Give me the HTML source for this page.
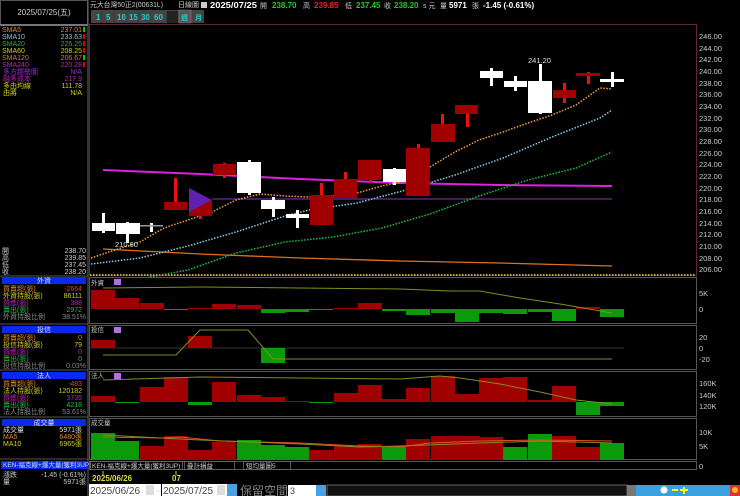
<!DOCTYPE html>
<html><head><meta charset="utf-8"><style>
body{margin:0;background:#000;width:740px;height:496px;overflow:hidden;font-family:"Liberation Sans","Noto Sans CJK TC",sans-serif}
svg{display:block}
text{font-family:"Liberation Sans","Noto Sans CJK TC",sans-serif}
</style></head><body>
<svg width="740" height="496" viewBox="0 0 740 496" xmlns="http://www.w3.org/2000/svg">
<rect width="740" height="496" fill="#000"/>
<!-- left panel -->
<rect x="0.5" y="0.5" width="87" height="24" fill="none" stroke="#555"/>
<text x="44" y="15" fill="#ccc" font-size="8" text-anchor="middle">2025/07/25(五)</text>
<line x1="0" y1="25" x2="88" y2="25" stroke="#777" stroke-width="2"/>
<line x1="88" y1="0" x2="88" y2="496" stroke="#666"/>
<g font-size="7">
<text x="2" y="32" fill="#e08a30">SMA5</text><text x="82" y="32" fill="#e08a30" text-anchor="end">237.01</text>
<text x="2" y="39" fill="#7fc8e0">SMA10</text><text x="82" y="39" fill="#7fc8e0" text-anchor="end">233.63</text>
<text x="2" y="46" fill="#20b040">SMA20</text><text x="82" y="46" fill="#20b040" text-anchor="end">226.25</text>
<text x="2" y="53" fill="#d0d020">SMA60</text><text x="82" y="53" fill="#d0d020" text-anchor="end">208.25</text>
<text x="2" y="60" fill="#d08030">SMA120</text><text x="82" y="60" fill="#d08030" text-anchor="end">206.67</text>
<text x="2" y="67" fill="#c020c0">SMA240</text><text x="82" y="67" fill="#c020c0" text-anchor="end">220.28</text>
<text x="3" y="74" fill="#9030d0">多方趨勢圖</text><text x="82" y="74" fill="#9030d0" text-anchor="end">N/A</text>
<text x="3" y="81" fill="#c020c0">融多成本</text><text x="82" y="81" fill="#c020c0" text-anchor="end">217.9</text>
<text x="3" y="88" fill="#d0d020">多由均線</text><text x="82" y="88" fill="#d0d020" text-anchor="end">111.78</text>
<text x="3" y="95" fill="#d0d020">由將</text><text x="82" y="95" fill="#d0d020" text-anchor="end">N/A</text>
</g>
<g fill="#0c0"><rect x="83" y="27" width="2" height="5"/><rect x="83" y="55" width="2" height="5"/></g>
<g fill="#d00"><rect x="83" y="34" width="2" height="5"/><rect x="83" y="41" width="2" height="5"/><rect x="83" y="48" width="2" height="5"/><rect x="83" y="62" width="2" height="5"/></g>
<g font-size="7" fill="#ccc">
<text x="2" y="253">開</text><text x="86" y="253" text-anchor="end">238.70</text>
<text x="2" y="260">高</text><text x="86" y="260" text-anchor="end">239.85</text>
<text x="2" y="267">低</text><text x="86" y="267" text-anchor="end">237.45</text>
<text x="2" y="274">收</text><text x="86" y="274" text-anchor="end">238.20</text>
</g>
<g font-size="7">
<rect x="2" y="277" width="84" height="7" fill="#0a28f0"/><text x="44" y="283" fill="#ddd" text-anchor="middle">外資</text>
<text x="3" y="291" fill="#e08a30">買賣超(張)</text><text x="82" y="291" fill="#e04040" text-anchor="end">-2664</text>
<text x="3" y="298" fill="#d0d020">外資持股(張)</text><text x="82" y="298" fill="#d0d020" text-anchor="end">86111</text>
<text x="3" y="305" fill="#c020c0">買進(張)</text><text x="82" y="305" fill="#c020c0" text-anchor="end">388</text>
<text x="3" y="312" fill="#20c040">賣出(張)</text><text x="82" y="312" fill="#20c040" text-anchor="end">2972</text>
<text x="3" y="319" fill="#888">外資持股比例</text><text x="86" y="319" fill="#888" text-anchor="end">38.51%</text>
<rect x="2" y="326" width="84" height="7" fill="#0a28f0"/><text x="44" y="332" fill="#ddd" text-anchor="middle">投信</text>
<text x="3" y="340" fill="#e08a30">買賣超(張)</text><text x="82" y="340" fill="#e08a30" text-anchor="end">0</text>
<text x="3" y="347" fill="#d0d020">投信持股(張)</text><text x="82" y="347" fill="#d0d020" text-anchor="end">79</text>
<text x="3" y="354" fill="#c020c0">買進(張)</text><text x="82" y="354" fill="#c020c0" text-anchor="end">0</text>
<text x="3" y="361" fill="#20c040">賣出(張)</text><text x="82" y="361" fill="#20c040" text-anchor="end">0</text>
<text x="3" y="368" fill="#888">投信持股比例</text><text x="86" y="368" fill="#888" text-anchor="end">0.03%</text>
<rect x="2" y="372" width="84" height="7" fill="#0a28f0"/><text x="44" y="378" fill="#ddd" text-anchor="middle">法人</text>
<text x="3" y="386" fill="#e08a30">買賣超(張)</text><text x="82" y="386" fill="#e04040" text-anchor="end">-483</text>
<text x="3" y="393" fill="#d0d020">法人持股(張)</text><text x="82" y="393" fill="#d0d020" text-anchor="end">120182</text>
<text x="3" y="400" fill="#c020c0">買進(張)</text><text x="82" y="400" fill="#c020c0" text-anchor="end">3735</text>
<text x="3" y="407" fill="#20c040">賣出(張)</text><text x="82" y="407" fill="#20c040" text-anchor="end">4218</text>
<text x="3" y="414" fill="#888">法人持股比例</text><text x="86" y="414" fill="#888" text-anchor="end">53.61%</text>
<rect x="2" y="419" width="84" height="7" fill="#0a28f0"/><text x="44" y="425" fill="#ddd" text-anchor="middle">成交量</text>
<text x="3" y="432" fill="#ddd">成交量</text><text x="82" y="432" fill="#ddd" text-anchor="end">5971張</text>
<text x="3" y="439" fill="#e08a30">MA5</text><text x="82" y="439" fill="#e08a30" text-anchor="end">6480張</text>
<text x="3" y="446" fill="#d0d020">MA10</text><text x="82" y="446" fill="#d0d020" text-anchor="end">6965張</text>
<rect x="1" y="461" width="86" height="8" fill="#0a28f0"/><text x="3" y="467" fill="#ddd" font-size="6.5">KEN-福克線+爆大量(獲利3UP)</text>
<text x="3" y="477" fill="#ccc">漲跌</text><text x="86" y="477" fill="#ccc" text-anchor="end">-1.45 (-0.61%)</text>
<text x="3" y="484" fill="#ccc">量</text><text x="86" y="484" fill="#ccc" text-anchor="end">5971張</text>
</g>
<g stroke="#555"><line x1="0" y1="276" x2="88" y2="276"/><line x1="0" y1="324" x2="88" y2="324"/><line x1="0" y1="370" x2="88" y2="370"/><line x1="0" y1="417" x2="88" y2="417"/><line x1="0" y1="459" x2="88" y2="459"/></g>

<!-- top header -->
<g font-size="8">
<text x="90" y="7" fill="#ccc" font-size="7" textLength="73" lengthAdjust="spacingAndGlyphs">元大台灣50正2(00631L)</text>
<text x="178" y="7" fill="#ccc" font-size="7">日線圖</text>
<rect x="201" y="2" width="6" height="6" fill="#ccc"/>
<text x="210" y="8" fill="#fff" font-weight="bold" textLength="47" lengthAdjust="spacingAndGlyphs">2025/07/25</text>
<text x="260" y="8" fill="#ccc" font-size="7">開</text><text x="272" y="8" fill="#2c2" font-weight="bold">238.70</text>
<text x="303" y="8" fill="#ccc" font-size="7">高</text><text x="314" y="8" fill="#e22" font-weight="bold">239.85</text>
<text x="345" y="8" fill="#ccc" font-size="7">低</text><text x="356" y="8" fill="#2c2" font-weight="bold">237.45</text>
<text x="384" y="8" fill="#ccc" font-size="7">收</text><text x="394" y="8" fill="#2c2" font-weight="bold">238.20</text>
<text x="423" y="8" fill="#ccc" font-size="7">s 元</text><text x="440" y="8" fill="#ccc" font-size="7">量</text>
<text x="449" y="8" fill="#fff" font-weight="bold">5971</text><text x="472" y="8" fill="#ccc" font-size="7">張</text>
<text x="483" y="8" fill="#fff" font-weight="bold">-1.45 (-0.61%)</text>
</g>
<g font-size="8" fill="#2cc" font-weight="bold">
<rect x="91" y="10" width="113" height="13" fill="#444"/>
<text x="96" y="20">1</text><text x="106" y="20">5</text><text x="117" y="20">10</text><text x="129" y="20">15</text><text x="141" y="20">30</text><text x="154" y="20">60</text>
<rect x="167" y="11" width="11" height="12" fill="#222"/>
<rect x="179" y="10" width="12" height="13" fill="#555" stroke="#888" stroke-width="0.5"/>
<text x="181" y="20" font-size="7">週</text><text x="195" y="20" font-size="7">月</text>
</g>
<g stroke="#333" stroke-width="0.6"><line x1="102" y1="11" x2="102" y2="23"/><line x1="114" y1="11" x2="114" y2="23"/><line x1="126" y1="11" x2="126" y2="23"/><line x1="138" y1="11" x2="138" y2="23"/><line x1="150" y1="11" x2="150" y2="23"/><line x1="166" y1="11" x2="166" y2="23"/></g>

<!-- chart frames -->
<rect x="89.5" y="24.5" width="607" height="251" fill="none" stroke="#5a2a38"/>
<g fill="none" stroke="#555">
<rect x="89.5" y="277.5" width="607" height="46"/>
<rect x="89.5" y="325.5" width="607" height="44"/>
<rect x="89.5" y="371.5" width="607" height="45"/>
<rect x="89.5" y="418.5" width="607" height="41"/>
<rect x="89.5" y="461.5" width="607" height="8"/>
</g>
<!-- y axis -->
<g font-size="7.5" fill="#ccc">
<text x="699" y="39">246.00</text><text x="699" y="51">244.00</text><text x="699" y="62">242.00</text><text x="699" y="74">240.00</text><text x="699" y="86">238.00</text><text x="699" y="97">236.00</text><text x="699" y="109">234.00</text><text x="699" y="121">232.00</text><text x="699" y="132">230.00</text><text x="699" y="144">228.00</text><text x="699" y="156">226.00</text><text x="699" y="167">224.00</text><text x="699" y="179">222.00</text><text x="699" y="191">220.00</text><text x="699" y="202">218.00</text><text x="699" y="214">216.00</text><text x="699" y="226">214.00</text><text x="699" y="237">212.00</text><text x="699" y="249">210.00</text><text x="699" y="261">208.00</text><text x="699" y="272">206.00</text>
<text x="699" y="296">5K</text><text x="699" y="312">0</text>
<text x="699" y="340">20</text><text x="699" y="351">0</text><text x="699" y="362">-20</text>
<text x="699" y="386">160K</text><text x="699" y="398">140K</text><text x="699" y="409">120K</text>
<text x="699" y="435">10K</text><text x="699" y="449">5K</text><text x="699" y="469">0</text>
</g>

<!-- MA lines -->
<polyline fill="none" stroke="#e07020" stroke-width="1.3" points="103,249 200,254 300,258 400,261 500,263 612,266"/>
<polyline fill="none" stroke="#e020e0" stroke-width="2" points="103,170 200,174 300,179 400,183 500,185 612,186"/>
<line x1="212" y1="199" x2="612" y2="199" stroke="#602080" stroke-width="1.5"/>
<polyline fill="none" stroke="#f0a040" stroke-width="1.5" stroke-dasharray="1.5 1.5" points="91,258 115,250 140,242 164,228 188,220 212,212 236,200 260,194 285,196 309,197 333,196 357,193 382,186 406,181 430,167 455,152 479,140 503,132 528,123 552,115 576,105 600,88 612,89"/>
<polyline fill="none" stroke="#80d0f0" stroke-width="1.5" stroke-dasharray="1.5 1.5" points="91,264 140,258 188,246 236,232 285,216 309,210 357,203 406,190 455,175 503,158 552,137 600,118 612,110"/>
<polyline fill="none" stroke="#20c040" stroke-width="1.5" stroke-dasharray="1.5 1.5" points="150,277 188,270 236,253 285,242 333,237 382,228 430,214 479,196 528,180 576,168 612,152"/>
<line x1="90" y1="275" x2="696" y2="275" stroke="#c0a040" stroke-width="2" stroke-dasharray="1.5 1.5"/>

<!-- candles -->
<g fill="#fff">
<rect x="102" y="213" width="3" height="20"/><rect x="92" y="223" width="23" height="8"/>
<rect x="126" y="222" width="3" height="21"/><rect x="116" y="223" width="24" height="11"/>
<rect x="150" y="223" width="3" height="9"/><rect x="140" y="225" width="23" height="1.5" fill="#999"/>
<rect x="248" y="160" width="3" height="35"/><rect x="237" y="162" width="24" height="31"/>
<rect x="272" y="197" width="3" height="20"/><rect x="261" y="200" width="24" height="9"/>
<rect x="296" y="210" width="3" height="18"/><rect x="286" y="214" width="23" height="4"/>
<rect x="393" y="168" width="3" height="17"/><rect x="383" y="169" width="23" height="13"/>
<rect x="490" y="68" width="3" height="18"/><rect x="480" y="71" width="23" height="7"/>
<rect x="514" y="76" width="3" height="15"/><rect x="504" y="81" width="23" height="6"/>
<rect x="539" y="64" width="3" height="50"/><rect x="528" y="81" width="24" height="32"/>
<rect x="611" y="72" width="3" height="15"/><rect x="600" y="79" width="24" height="3"/>
</g>
<g fill="#ee1010">
<rect x="174" y="178" width="3" height="32"/><rect x="199" y="200" width="3" height="19"/>
<rect x="223" y="163" width="3" height="15"/><rect x="320" y="183" width="3" height="42"/>
<rect x="344" y="172" width="3" height="26"/><rect x="369" y="160" width="3" height="23"/>
<rect x="417" y="144" width="3" height="52"/><rect x="441" y="114" width="3" height="28"/>
<rect x="466" y="105" width="3" height="22"/><rect x="563" y="83" width="3" height="20"/>
<rect x="587" y="72" width="3" height="12"/>
</g>
<g fill="#a00000">
<rect x="164" y="202" width="23" height="8"/><rect x="189" y="200" width="23" height="16"/>
<rect x="213" y="164" width="23" height="11"/><rect x="310" y="195" width="23" height="30"/>
<rect x="334" y="179" width="23" height="19"/><rect x="358" y="160" width="23" height="20"/>
<rect x="406" y="148" width="24" height="48"/><rect x="431" y="124" width="24" height="18"/>
<rect x="455" y="105" width="23" height="9"/><rect x="553" y="90" width="23" height="8"/>
<rect x="576" y="73" width="24" height="3"/>
</g>
<polygon points="189,188 212,200 189,212" fill="#6020b0"/>
<text x="115" y="247" fill="#ddd" font-size="7.5">210.60</text>
<text x="528" y="63" fill="#ddd" font-size="7.5">241.20</text>

<!-- sub panel labels -->
<g font-size="6.5" fill="#ccc">
<text x="91" y="285">外資</text><text x="91" y="332">投信</text><text x="91" y="378">法人</text><text x="91" y="425">成交量</text>
</g>
<g fill="#b070e0"><rect x="114" y="279" width="7" height="6"/><rect x="114" y="327" width="7" height="6"/><rect x="114" y="373" width="7" height="6"/></g>

<!-- 外資 bars -->
<g fill="#a00000">
<rect x="91" y="290" width="24" height="19"/><rect x="115" y="298" width="24" height="11"/><rect x="140" y="303" width="24" height="6"/>
<rect x="188" y="308" width="24" height="1"/><rect x="212" y="304" width="24" height="5"/><rect x="237" y="305" width="24" height="4"/>
<rect x="334" y="308" width="24" height="1"/><rect x="358" y="303" width="24" height="6"/><rect x="576" y="307" width="24" height="2"/>
</g>
<g fill="#0a9a0a">
<rect x="164" y="309" width="24" height="1"/><rect x="261" y="309" width="24" height="4"/><rect x="285" y="309" width="24" height="3"/>
<rect x="309" y="309" width="24" height="1"/><rect x="382" y="309" width="24" height="2"/><rect x="406" y="309" width="24" height="6"/>
<rect x="431" y="309" width="24" height="4"/><rect x="455" y="309" width="24" height="13"/><rect x="479" y="309" width="24" height="4"/>
<rect x="503" y="309" width="24" height="5"/><rect x="528" y="309" width="24" height="3"/>
<rect x="552" y="309" width="24" height="12"/>
<rect x="600" y="309" width="24" height="8"/>
</g>
<polyline fill="none" stroke="#8a8a20" points="103,288 200,287 300,288 400,289 450,291 480,291 520,298 560,304 612,313"/>
<!-- 投信 -->
<line x1="90" y1="348" x2="624" y2="348" stroke="#333"/>
<rect x="91" y="340" width="24" height="8" fill="#a00000"/>
<rect x="188" y="336" width="24" height="12" fill="#a00000"/>
<rect x="261" y="348" width="24" height="15" fill="#0a9a0a"/>
<polyline fill="none" stroke="#8a8a20" points="103,355 176,355 200,330 248,330 273,359 612,359"/>
<!-- 法人 -->
<g fill="#a00000">
<rect x="91" y="396" width="24" height="6"/><rect x="140" y="387" width="24" height="15"/><rect x="164" y="377" width="24" height="25"/>
<rect x="212" y="382" width="24" height="20"/><rect x="237" y="395" width="24" height="7"/><rect x="261" y="397" width="24" height="5"/>
<rect x="285" y="401" width="24" height="1"/><rect x="334" y="393" width="24" height="9"/><rect x="358" y="385" width="24" height="17"/>
<rect x="382" y="399" width="24" height="3"/><rect x="406" y="388" width="24" height="14"/><rect x="431" y="376" width="24" height="26"/>
<rect x="455" y="394" width="24" height="8"/><rect x="479" y="378" width="24" height="24"/><rect x="503" y="377" width="24" height="25"/>
<rect x="528" y="400" width="24" height="2"/><rect x="552" y="386" width="24" height="16"/>
</g>
<g fill="#0a9a0a">
<rect x="115" y="402" width="24" height="1"/><rect x="188" y="402" width="24" height="3"/><rect x="309" y="402" width="24" height="1"/>
<rect x="576" y="402" width="24" height="13"/><rect x="600" y="402" width="24" height="4"/>
</g>
<polyline fill="none" stroke="#8a8a20" points="103,380 200,377 300,378 400,379 440,376 460,378 500,384 540,392 576,400 612,404"/>
<!-- 成交量 -->
<g fill="#0a9a0a">
<rect x="91" y="433" width="24" height="27"/><rect x="115" y="441" width="24" height="19"/><rect x="237" y="440" width="24" height="20"/>
<rect x="261" y="445" width="24" height="15"/><rect x="285" y="447" width="24" height="13"/><rect x="382" y="447" width="24" height="13"/>
<rect x="503" y="447" width="24" height="13"/><rect x="528" y="434" width="24" height="26"/><rect x="600" y="443" width="24" height="17"/>
</g>
<g fill="#a00000">
<rect x="140" y="446" width="24" height="14"/><rect x="164" y="436" width="24" height="24"/><rect x="188" y="450" width="24" height="10"/>
<rect x="212" y="442" width="24" height="18"/><rect x="309" y="450" width="24" height="10"/><rect x="334" y="446" width="24" height="14"/>
<rect x="358" y="444" width="24" height="16"/><rect x="406" y="439" width="24" height="21"/><rect x="431" y="436" width="24" height="24"/>
<rect x="455" y="436" width="24" height="24"/><rect x="479" y="437" width="24" height="23"/><rect x="552" y="436" width="24" height="24"/>
<rect x="576" y="447" width="24" height="13"/>
</g>
<polyline fill="none" stroke="#e05020" points="103,437 160,438 180,437 220,441 300,443 360,446 400,447 430,443 480,441 540,440 612,441"/>
<polyline fill="none" stroke="#8a8a20" points="103,435 200,440 300,444 360,447 400,446 480,443 540,441 612,443"/>

<!-- bottom controls -->
<g font-size="6.5">
<rect x="90.5" y="461.5" width="92" height="8" fill="#000" stroke="#888" stroke-width="0.6"/>
<text x="92" y="468" fill="#ccc">KEN-福克線+爆大量(獲利3UP)</text>
<rect x="184.5" y="461.5" width="50" height="8" fill="#000" stroke="#888" stroke-width="0.6"/>
<text x="187" y="468" fill="#ccc">疊計損益</text>
<rect x="243.5" y="461.5" width="47" height="8" fill="#000" stroke="#888" stroke-width="0.6"/>
<text x="246" y="468" fill="#ccc">短均量圖5</text>
</g>
<line x1="103" y1="471" x2="103" y2="475" stroke="#cc3"/><line x1="176" y1="471" x2="176" y2="475" stroke="#cc3"/>
<text x="92" y="481" fill="#dd3" font-size="8" font-weight="bold">2025/06/26</text>
<text x="172" y="481" fill="#dd3" font-size="8" font-weight="bold">07</text>
<rect x="89" y="484" width="72" height="12" fill="#fff"/>
<text x="90" y="494" fill="#444" font-size="10">2025/06/26</text>
<rect x="146" y="485" width="8" height="10" fill="#ddd"/>
<text x="156" y="494" fill="#ccc" font-size="9">~</text>
<rect x="162" y="484" width="70" height="12" fill="#fff"/>
<text x="163" y="494" fill="#444" font-size="10">2025/07/25</text>
<rect x="217" y="485" width="8" height="10" fill="#ddd"/>
<rect x="227" y="484" width="10" height="12" fill="#4aa0e0"/>
<text x="240" y="495" fill="#888" font-size="12">保留空間</text>
<rect x="288" y="485" width="28" height="11" fill="#fff"/>
<text x="290" y="494" fill="#444" font-size="9">3</text>
<rect x="316" y="485" width="10" height="11" fill="#4aa0e0"/>
<rect x="327" y="485" width="300" height="11" fill="#111" stroke="#666"/>
<rect x="627" y="485" width="9" height="11" fill="#777"/>
<rect x="636" y="485" width="94" height="11" fill="#3aa0e0"/>
<g fill="#fff"><circle cx="664" cy="490" r="3.5"/><rect x="672" y="489" width="6" height="2" fill="#ff0"/><rect x="683" y="487" width="2" height="7" fill="#ff0"/><rect x="680" y="489" width="8" height="2" fill="#ff0"/></g>
<rect x="730" y="485" width="10" height="11" fill="#e03030"/>
<circle cx="735" cy="490" r="3" fill="#f0c020"/>
</svg>
</body></html>
